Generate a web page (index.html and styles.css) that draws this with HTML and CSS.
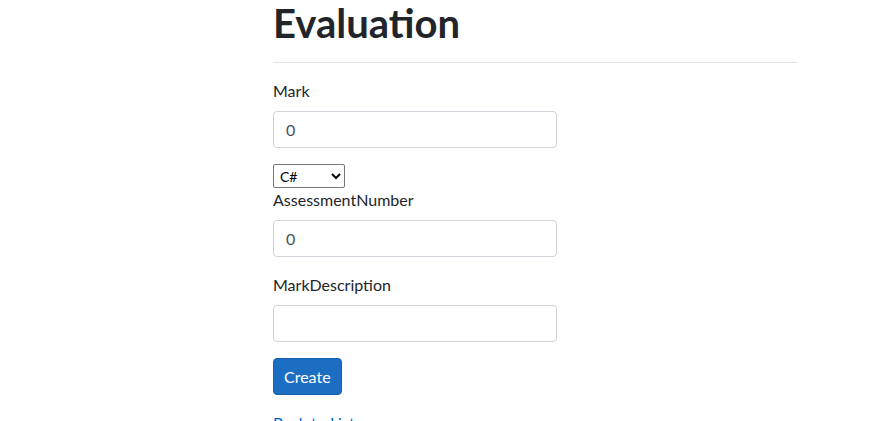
FILE: index.html
```html
<!DOCTYPE html>
<html lang="en">
<head>
<meta charset="utf-8">
<title>Evaluation</title>
<link rel="stylesheet" href="styles.css">
</head>
<body>
<main class="page">
  <h1 class="title">Evaluation</h1>
  <hr class="divider">
  <form class="form">
    <div class="group">
      <label class="label" for="mark">Mark</label>
      <input class="control" id="mark" type="text" value="0">
    </div>
    <select class="select">
      <option>C#</option>
    </select>
    <div class="group">
      <label class="label" for="num">AssessmentNumber</label>
      <input class="control" id="num" type="text" value="0">
    </div>
    <div class="group">
      <label class="label" for="desc">MarkDescription</label>
      <input class="control" id="desc" type="text" value="">
    </div>
    <div class="group">
      <button class="btn" type="button">Create</button>
    </div>
  </form>
  <div class="back"><a class="link" href="#">Back to List</a></div>
</main>
</body>
</html>
```
FILE: styles.css
```css
html, body {
  margin: 0;
  padding: 0;
  background: #fff;
  overflow: hidden;
}
body {
  font-family: Lato, "Open Sans", sans-serif;
  font-size: 16px;
  line-height: 1.5;
  color: #212529;
}
.page {
  width: 525px;
  margin-left: 273px;
}
.title {
  font-size: 40px;
  font-weight: 700;
  line-height: 48px;
  margin: -1px 0 15px;
}
.divider {
  border: 0;
  border-top: 1px solid #e3e3e3;
  margin: 0 0 16px;
  height: 0;
}
.form {
  display: flex;
  flex-direction: column;
  align-items: flex-start;
}
.group {
  display: flex;
  flex-direction: column;
  align-items: flex-start;
  margin-bottom: 16px;
}
.label {
  margin-bottom: 8px;
}
.control {
  box-sizing: border-box;
  width: 284px;
  height: 37px;
  padding: 6px 12px;
  font: inherit;
  color: #495057;
  border: 1px solid #ced4da;
  border-radius: 4px;
  background: #fff;
}
.select {
  box-sizing: border-box;
  width: 72px;
  height: 24px;
  padding: 0 2px;
  font-family: inherit;
  font-size: 14px;
  border: 1px solid #767676;
  border-radius: 2px;
  background: #fff;
  color: #000;
}
.btn {
  box-sizing: border-box;
  height: 37px;
  padding: 6px 10px;
  font: inherit;
  color: #fff;
  background: #1b6ec2;
  border: 1px solid #1861ac;
  border-radius: 4px;
}
.link {
  color: #0366d6;
  text-decoration: none;
}
```
